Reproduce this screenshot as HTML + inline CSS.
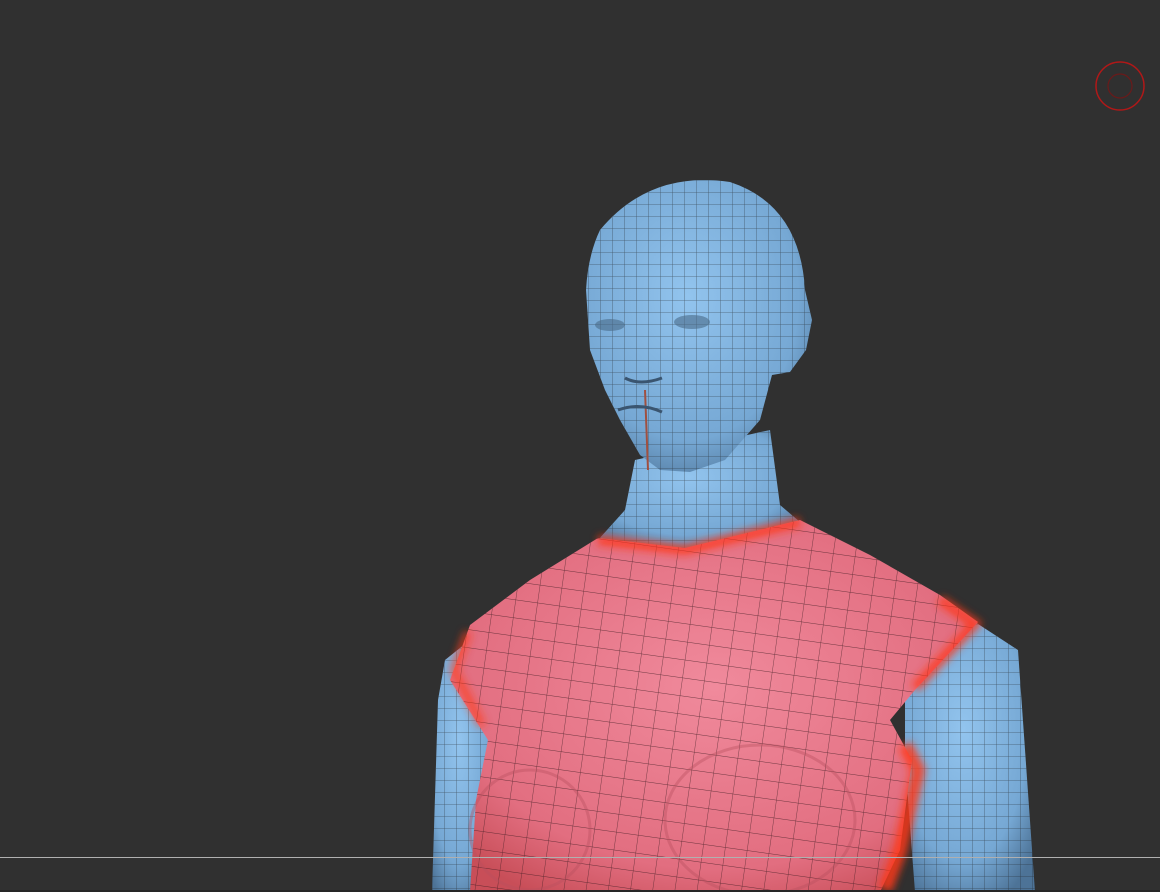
<!DOCTYPE html>
<html><head><style>
html,body{margin:0;padding:0;background:#303030;width:1160px;height:892px;overflow:hidden}
</style></head><body>
<svg width="1160" height="892" viewBox="0 0 1160 892" xmlns="http://www.w3.org/2000/svg">
<defs>
<pattern id="g" width="12" height="12" patternUnits="userSpaceOnUse">
<path d="M0 0H12M0 0V12" stroke="#1a1a1a" stroke-width="0.8" fill="none" opacity="0.6"/>
</pattern>
<pattern id="g2" width="22" height="18" patternUnits="userSpaceOnUse" patternTransform="rotate(8)">
<path d="M0 0H22M0 0V18" stroke="#3a1a20" stroke-width="0.9" fill="none" opacity="0.7"/>
</pattern>
<radialGradient id="bl" cx="0.45" cy="0.4" r="0.7">
<stop offset="0" stop-color="#92c4ee"/><stop offset="0.7" stop-color="#76a8d4"/><stop offset="1" stop-color="#4d7397"/>
</radialGradient>
<radialGradient id="rd" cx="0.5" cy="0.45" r="0.65">
<stop offset="0" stop-color="#f08a9c"/><stop offset="0.75" stop-color="#e26e80"/><stop offset="1" stop-color="#c84e58"/>
</radialGradient>
<filter id="bf" x="-20%" y="-20%" width="140%" height="140%"><feGaussianBlur stdDeviation="4"/></filter>
</defs>
<rect width="1160" height="892" fill="#303030"/>
<path d="M445 660 L470 640 L492 740 L475 892 L432 892 L438 700 Z" fill="url(#bl)"/>
<path d="M445 660 L470 640 L492 740 L475 892 L432 892 L438 700 Z" fill="url(#g)"/>
<path d="M905 700 L975 622 L1018 650 L1035 892 L915 892 L905 760 Z" fill="url(#bl)"/>
<path d="M905 700 L975 622 L1018 650 L1035 892 L915 892 L905 760 Z" fill="url(#g)"/>
<path d="M635 460 L770 430 L780 505 L800 522 L740 545 L685 548 L598 540 L625 510 Z" fill="url(#bl)"/>
<path d="M635 460 L770 430 L780 505 L800 522 L740 545 L685 548 L598 540 L625 510 Z" fill="url(#g)"/>
<path d="M598 538 L685 548 L800 520 L870 555 L940 595 L978 622 L915 690 L890 720 L912 760 L900 850 L880 892 L470 892 L476 800 L488 740 L450 680 L470 625 L530 580 Z" fill="url(#rd)"/>
<path d="M598 538 L685 548 L800 520 L870 555 L940 595 L978 622 L915 690 L890 720 L912 760 L900 850 L880 892 L470 892 L476 800 L488 740 L450 680 L470 625 L530 580 Z" fill="url(#g2)"/>
<g filter="url(#bf)">
<path d="M598 540 L685 550 L800 522" stroke="#ff3a1a" stroke-width="10" fill="none" opacity="0.8"/>
<path d="M940 600 L975 624 L915 688" stroke="#ff3a1a" stroke-width="10" fill="none" opacity="0.8"/>
<path d="M468 632 L454 670 L482 725" stroke="#ff3a1a" stroke-width="8" fill="none" opacity="0.7"/>
<path d="M905 745 L918 770 L900 850 L885 890" stroke="#ff3a1a" stroke-width="14" fill="none" opacity="0.85"/>
</g>
<ellipse cx="530" cy="830" rx="60" ry="60" fill="none" stroke="#b8505e" stroke-width="3" opacity="0.4"/>
<ellipse cx="760" cy="820" rx="95" ry="75" fill="none" stroke="#b8505e" stroke-width="3" opacity="0.4"/>
<path d="M600 230 Q650 170 730 182 Q800 205 805 290 L812 320 L806 350 L790 372 L772 375 L760 420 L725 460 L690 472 L660 470 L640 455 L620 420 L605 390 L590 350 L586 290 Q588 255 600 230 Z" fill="url(#bl)"/>
<path d="M600 230 Q650 170 730 182 Q800 205 805 290 L812 320 L806 350 L790 372 L772 375 L760 420 L725 460 L690 472 L660 470 L640 455 L620 420 L605 390 L590 350 L586 290 Q588 255 600 230 Z" fill="url(#g)"/>
<path d="M645 390 L648 470" stroke="#a05040" stroke-width="2"/>
<ellipse cx="610" cy="325" rx="15" ry="6" fill="#4a6a88" opacity="0.6"/>
<ellipse cx="692" cy="322" rx="18" ry="7" fill="#4a6a88" opacity="0.6"/>
<path d="M625 378 Q640 386 662 378" stroke="#3a5570" stroke-width="3" fill="none"/>
<path d="M618 410 Q640 402 662 412" stroke="#3a5570" stroke-width="3" fill="none"/>
<rect x="0" y="857" width="1160" height="1" fill="#b0b0b0"/>
<rect x="0" y="890" width="1160" height="2" fill="#262626"/>
<circle cx="1120" cy="86" r="24" fill="none" stroke="#b01818" stroke-width="1.5"/>
<circle cx="1120" cy="86" r="12" fill="none" stroke="#6a1a1a" stroke-width="1.2"/>
</svg>
</body></html>
